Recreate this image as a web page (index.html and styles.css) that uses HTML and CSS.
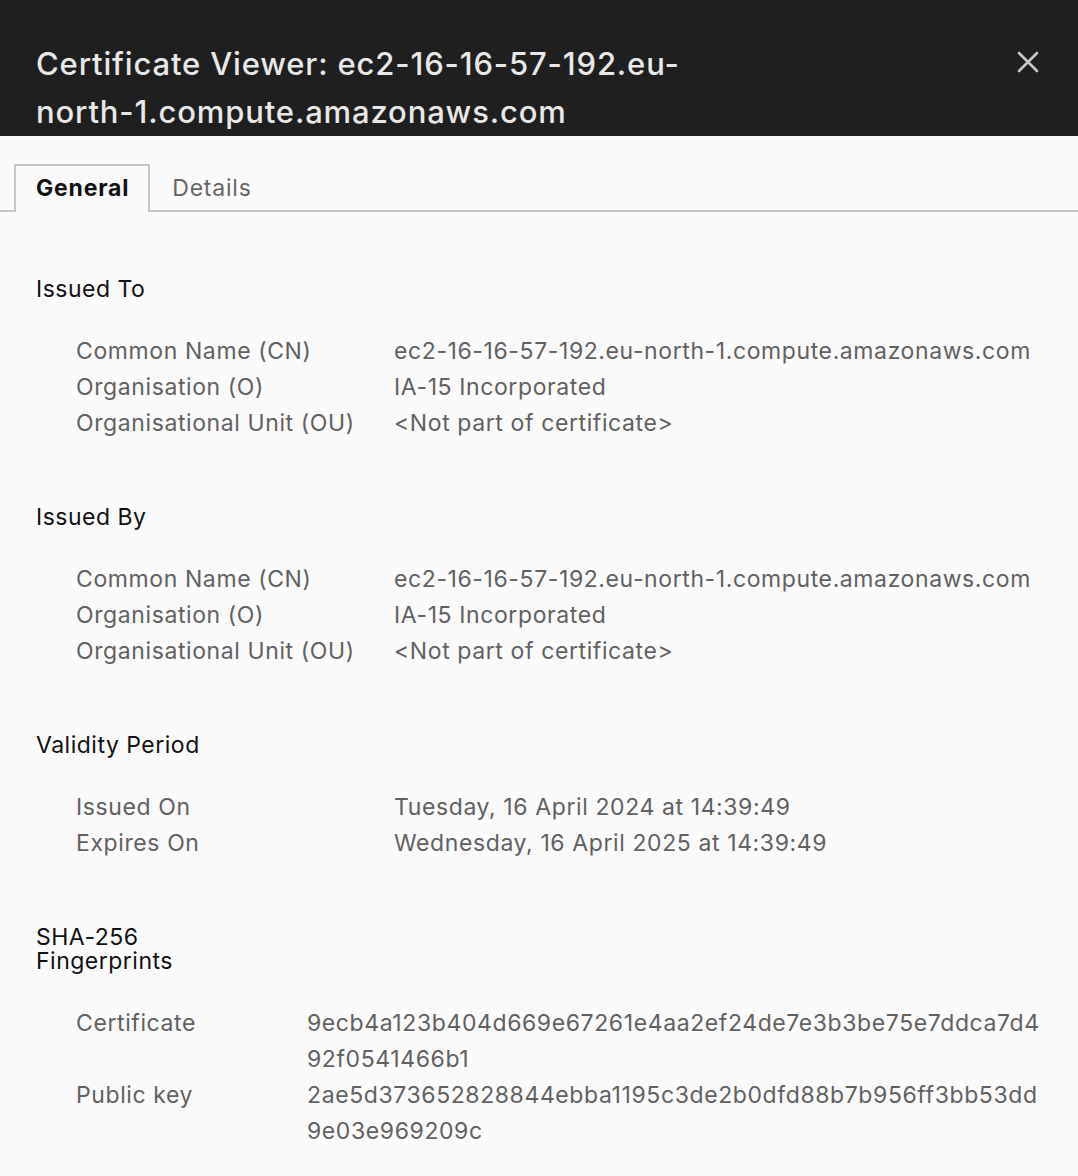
FILE: index.html
```html
<!DOCTYPE html>
<html lang="en">
<head>
<meta charset="utf-8">
<title>Certificate Viewer</title>
<link rel="stylesheet" href="styles.css">
</head>
<body>
<div class="dialog">
  <header class="titlebar">
    <h1 class="title">Certificate Viewer: ec2-16-16-57-192.eu-north-1.compute.amazonaws.com</h1>
    <button class="close" aria-label="Close">
      <svg width="22" height="22" viewBox="0 0 22 22"><path d="M2 2 L20 20 M20 2 L2 20" stroke="#c8c8c8" stroke-width="2.6" stroke-linecap="round" fill="none"/></svg>
    </button>
  </header>
  <nav class="tabs">
    <div class="tab active">General</div>
    <div class="tab">Details</div>
  </nav>
  <main class="content">
    <section class="section">
      <h2 class="heading">Issued To</h2>
      <div class="rows">
        <div class="label">Common Name (CN)</div><div class="value">ec2-16-16-57-192.eu-north-1.compute.amazonaws.com</div>
        <div class="label">Organisation (O)</div><div class="value">IA-15 Incorporated</div>
        <div class="label">Organisational Unit (OU)</div><div class="value">&lt;Not part of certificate&gt;</div>
      </div>
    </section>
    <section class="section">
      <h2 class="heading">Issued By</h2>
      <div class="rows">
        <div class="label">Common Name (CN)</div><div class="value">ec2-16-16-57-192.eu-north-1.compute.amazonaws.com</div>
        <div class="label">Organisation (O)</div><div class="value">IA-15 Incorporated</div>
        <div class="label">Organisational Unit (OU)</div><div class="value">&lt;Not part of certificate&gt;</div>
      </div>
    </section>
    <section class="section">
      <h2 class="heading">Validity Period</h2>
      <div class="rows">
        <div class="label">Issued On</div><div class="value">Tuesday, 16 April 2024 at 14:39:49</div>
        <div class="label">Expires On</div><div class="value">Wednesday, 16 April 2025 at 14:39:49</div>
      </div>
    </section>
    <section class="section">
      <h2 class="heading narrow">SHA-256 Fingerprints</h2>
      <div class="rows fp">
        <div class="label">Certificate</div><div class="value hash">9ecb4a123b404d669e67261e4aa2ef24de7e3b3be75e7ddca7d4<br>92f0541466b1</div>
        <div class="label">Public key</div><div class="value hash">2ae5d373652828844ebba1195c3de2b0dfd88b7b956ff3bb53dd<br>9e03e969209c</div>
      </div>
    </section>
  </main>
</div>
</body>
</html>
```
FILE: styles.css
```css
* { box-sizing: border-box; }
html, body { margin: 0; padding: 0; }
body {
  background: #fafafa;
  font-family: Inter, "Noto Sans", sans-serif;
  width: 1078px;
  height: 1176px;
  overflow: hidden;
}
.titlebar {
  background: #1f1f1f;
  height: 136px;
  display: flex;
  justify-content: space-between;
  align-items: flex-start;
  padding: 40px 36px 0 36px;
}
.title {
  margin: 0;
  width: 700px;
  color: #e8e8e8;
  font-size: 31px;
  font-weight: 500;
  letter-spacing: 0.85px;
  line-height: 48px;
}
.close {
  background: none;
  border: none;
  padding: 0;
  margin: 11px 3px 0 0;
  width: 22px;
  height: 22px;
  display: flex;
}
.tabs {
  margin-top: 28px;
  display: flex;
  padding-left: 14px;
  border-bottom: 2px solid #c6c6c6;
  height: 48px;
}
.tab {
  font-size: 23px;
  letter-spacing: 0.8px;
  line-height: 44px;
  padding: 2px 20px 0 22px;
  color: #666;
  height: 48px;
}
.tab.active {
  color: #111;
  font-weight: 700;
  border: 2px solid #c6c6c6;
  border-bottom: none;
  padding: 0 19px 0 20px;
  background: #fafafa;
  height: 48px;
  margin-bottom: -2px;
}
.content {
  padding: 0 36px;
}
.section {
  padding-top: 64px;
}
.section:first-child { padding-top: 65px; }
.heading {
  margin: 0 0 32px 0;
  font-size: 23px;
  letter-spacing: 0.5px;
  font-weight: 400;
  line-height: 24px;
  color: #111;
}
.heading.narrow { width: 150px; }
.rows {
  display: grid;
  grid-template-columns: 318px 1fr;
  padding-left: 40px;
  font-size: 23px;
  letter-spacing: 0.6px;
  line-height: 36px;
  color: #616161;
}
.rows.fp { grid-template-columns: 231px 1fr; }
.label, .value { white-space: nowrap; }
```
